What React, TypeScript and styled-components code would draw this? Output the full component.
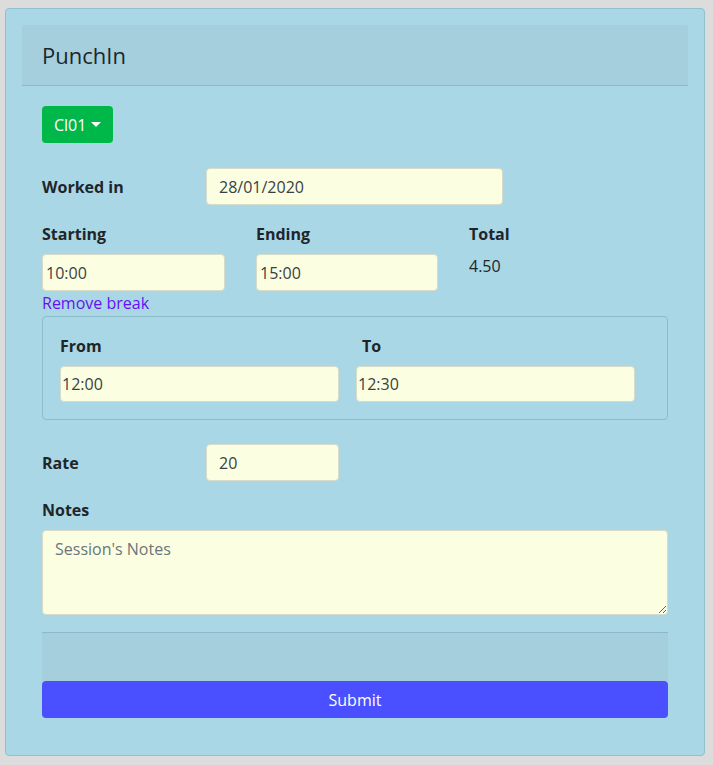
import React from "react";
import styled, { createGlobalStyle } from "styled-components";

const GlobalStyle = createGlobalStyle`
  html, body { margin: 0; padding: 0; background: #dcdcdc; }
  body { font-family: "Open Sans", "Noto Sans", sans-serif; color: #212529; font-size: 16px; line-height: 24px; }
  * { box-sizing: border-box; }
`;

const Page = styled.div`
  padding: 8px 8px 10px 5px;
`;

const Card = styled.div`
  background: #a9d7e5;
  border: 1px solid #93c0cf;
  border-radius: 4px;
  padding: 16px;
`;

const Header = styled.div`
  background: #a5cfdd;
  height: 61px;
  border-bottom: 1px solid #8db8c7;
  border-radius: 3px 3px 0 0;
  padding: 0 20px;
  display: flex;
  align-items: center;
`;

const Title = styled.h1`
  margin: 0;
  font-size: 22px;
  font-weight: 400;
  line-height: 28px;
`;

const Body = styled.div`
  padding: 20px 20px 21px;
  display: flex;
  flex-direction: column;
`;

const DropButton = styled.button`
  align-self: flex-start;
  height: 37px;
  padding: 0 12px;
  background: #00b74a;
  color: #fff;
  border: none;
  border-radius: 4px;
  font: inherit;
  display: flex;
  align-items: center;
  gap: 5px;
`;

const Caret = styled.span`
  width: 0;
  height: 0;
  border-left: 5px solid transparent;
  border-right: 5px solid transparent;
  border-top: 5px solid #fff;
`;

const InlineRow = styled.div<{ $mt: number }>`
  display: flex;
  align-items: center;
  margin-top: ${(p) => p.$mt}px;
`;

const Label = styled.label`
  font-weight: 700;
  display: block;
`;

const InlineLabel = styled(Label)`
  width: 164px;
`;

const Input = styled.input<{ $w?: number; $pad?: number; $h?: number }>`
  width: ${(p) => (p.$w ? `${p.$w}px` : "100%")};
  height: ${(p) => p.$h ?? 37}px;
  background: #fbfee0;
  border: 1px solid #d6dcc8;
  border-radius: 4px;
  padding: 0 ${(p) => p.$pad ?? 12}px;
  font: inherit;
  color: #3a3f44;
  outline: none;
`;

const Cols = styled.div`
  display: grid;
  grid-template-columns: 214px 213px 1fr;
  margin-top: 17px;
`;

const Col = styled.div`
  display: flex;
  flex-direction: column;
  gap: 8px;
`;

const TotalValue = styled.div`
  color: #212529;
`;

const Link = styled.a`
  color: #6610f2;
  text-decoration: none;
  align-self: flex-start;
  line-height: 24px;
`;

const BreakBox = styled.div`
  margin-top: 1px;
  border: 1px solid #8fbccb;
  border-radius: 4px;
  padding: 17px 32px 17px 17px;
  display: grid;
  grid-template-columns: 296px 1fr;
`;

const BreakCol = styled.div<{ $lx?: number }>`
  display: flex;
  flex-direction: column;
  gap: 8px;
  & > label { padding-left: ${(p) => p.$lx ?? 0}px; }
`;

const StackLabel = styled(Label)`
  margin-top: 17px;
`;

const TextArea = styled.textarea`
  margin-top: 8px;
  width: 100%;
  height: 85px;
  background: #fbfee0;
  border: 1px solid #d6dcc8;
  border-radius: 4px;
  padding: 6px 12px;
  font: inherit;
  color: #3a3f44;
  outline: none;
  &::placeholder { color: #6c757d; }
`;

const Footer = styled.div`
  margin-top: 17px;
  height: 49px;
  background: #a5cfdd;
  border-top: 1px solid #8db8c7;
`;

const Submit = styled.button`
  height: 37px;
  width: 100%;
  background: #4a50ff;
  color: #fff;
  border: none;
  border-radius: 4px;
  font: inherit;
`;

export default function App() {
  return (
    <>
      <GlobalStyle />
      <Page>
        <Card>
          <Header>
            <Title>PunchIn</Title>
          </Header>
          <Body>
            <DropButton>
              Cl01 <Caret />
            </DropButton>
            <InlineRow $mt={25}>
              <InlineLabel>Worked in</InlineLabel>
              <Input $w={297} readOnly value="28/01/2020" />
            </InlineRow>
            <Cols>
              <Col>
                <Label>Starting</Label>
                <Input $w={183} $pad={3} readOnly value="10:00" />
              </Col>
              <Col>
                <Label>Ending</Label>
                <Input $w={182} $pad={3} readOnly value="15:00" />
              </Col>
              <Col>
                <Label>Total</Label>
                <TotalValue>4.50</TotalValue>
              </Col>
            </Cols>
            <Link href="#">Remove break</Link>
            <BreakBox>
              <BreakCol>
                <Label>From</Label>
                <Input $w={279} $h={36} $pad={1} readOnly value="12:00" />
              </BreakCol>
              <BreakCol $lx={6}>
                <Label>To</Label>
                <Input $w={279} $h={36} $pad={1} readOnly value="12:30" />
              </BreakCol>
            </BreakBox>
            <InlineRow $mt={24}>
              <InlineLabel>Rate</InlineLabel>
              <Input $w={133} readOnly value="20" />
            </InlineRow>
            <StackLabel>Notes</StackLabel>
            <TextArea placeholder="Session's Notes" />
            <Footer />
            <Submit>Submit</Submit>
          </Body>
        </Card>
      </Page>
    </>
  );
}
